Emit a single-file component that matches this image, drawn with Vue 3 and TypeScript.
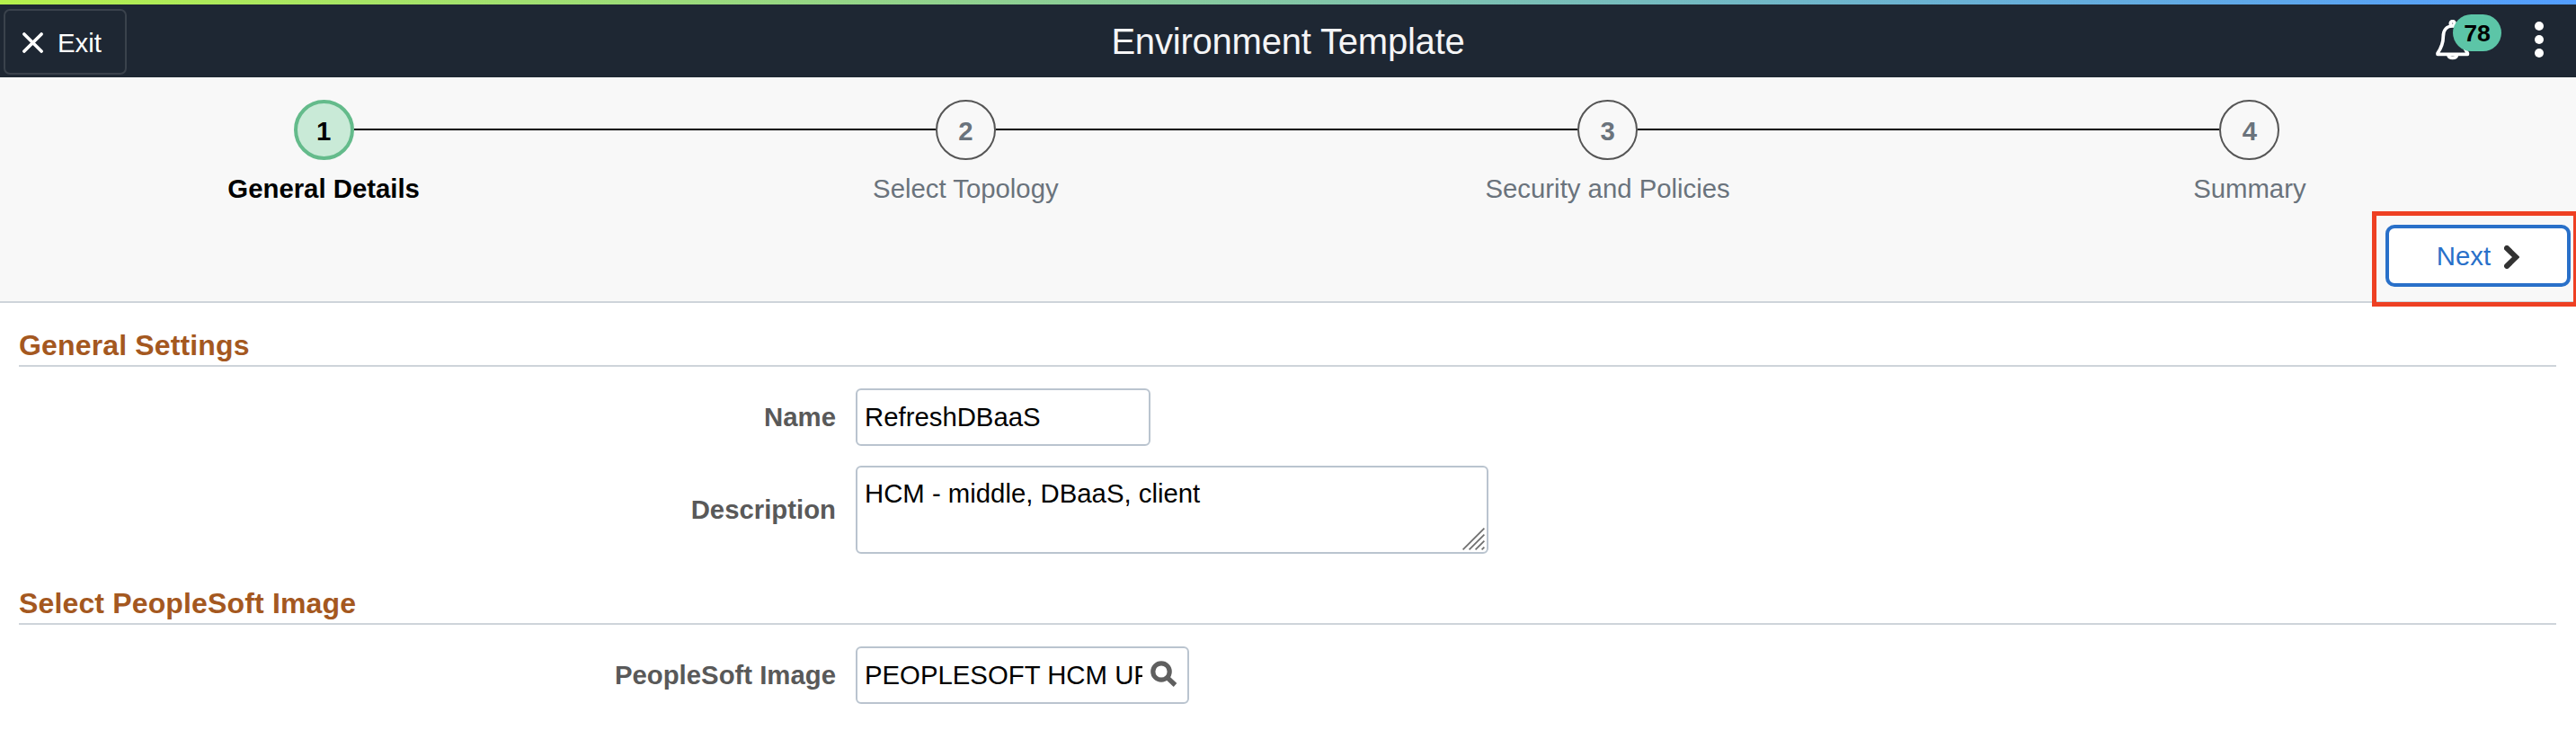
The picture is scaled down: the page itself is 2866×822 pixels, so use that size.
<script setup lang="ts">
import { ref } from 'vue'

interface Step {
  number: number
  label: string
}

const steps: Step[] = [
  { number: 1, label: 'General Details' },
  { number: 2, label: 'Select Topology' },
  { number: 3, label: 'Security and Policies' },
  { number: 4, label: 'Summary' },
]

const current = ref(1)
const name = ref('RefreshDBaaS')
const description = ref('HCM - middle, DBaaS, client')
const image = ref('PEOPLESOFT HCM UPDATE')
</script>

<template>
  <div class="page">
    <div class="accent"></div>
    <header class="banner">
      <button class="exit" type="button">
        <svg class="exit-icon" viewBox="0 0 23 23">
          <path d="M1.9 1.9 21.1 21.1M21.1 1.9 1.9 21.1" />
        </svg>
        <span>Exit</span>
      </button>
      <h1 class="title">Environment Template</h1>
      <div class="actions">
        <div class="bell">
          <svg class="bell-icon" viewBox="0 0 38 45">
            <circle cx="18.7" cy="4" r="2.4" />
            <path d="M2 37.2C6 31.5 8.3 26 8.3 18.5C8.3 11.5 12 7 18.7 7C25.4 7 29.1 11.5 29.1 18.5C29.1 26 31.4 31.5 35.4 37.2V38.3H2Z" />
            <path d="M14 39.5C15 43.4 22.4 43.4 23.4 39.5" />
          </svg>
          <span class="badge">78</span>
        </div>
        <svg class="dots" viewBox="0 0 10 40">
          <circle cx="5" cy="5" r="5" />
          <circle cx="5" cy="20" r="5" />
          <circle cx="5" cy="35" r="5" />
        </svg>
      </div>
    </header>

    <section class="wizard">
      <ol class="steps">
        <li v-for="step in steps" :key="step.number" class="step" :class="{ active: step.number === current }">
          <div class="track">
            <span class="line" :class="{ hidden: step.number === 1 }"></span>
            <span class="circle">{{ step.number }}</span>
            <span class="line" :class="{ hidden: step.number === steps.length }"></span>
          </div>
          <span class="step-label">{{ step.label }}</span>
        </li>
      </ol>
      <div class="callout">
        <button class="next" type="button">
          <span>Next</span>
          <svg class="chevron" viewBox="0 0 17 26"><path d="M3 3 13.3 13 3 23" /></svg>
        </button>
      </div>
    </section>

    <main class="content">
      <h2 class="heading">General Settings</h2>
      <div class="row name-row">
        <label class="label" for="name">Name</label>
        <input id="name" v-model="name" class="field name" type="text" spellcheck="false" />
      </div>
      <div class="row description-row">
        <label class="label" for="description">Description</label>
        <div class="field area">
          <textarea id="description" v-model="description" spellcheck="false"></textarea>
          <svg class="grip" viewBox="0 0 25 25">
            <path d="M.6 24.4 24.4 .6M7.6 24.4 24.4 7.6M14.6 24.4 24.4 14.6M21.6 24.4 24.4 21.6" />
          </svg>
        </div>
      </div>
      <h2 class="heading second">Select PeopleSoft Image</h2>
      <div class="row image-row">
        <label class="label" for="image">PeopleSoft Image</label>
        <div class="field lookup">
          <input id="image" v-model="image" type="text" spellcheck="false" />
          <svg class="search" viewBox="0 0 30 29">
            <circle cx="12" cy="12" r="9.2" />
            <path d="M18.5 18.5 27.5 27" />
          </svg>
        </div>
      </div>
    </main>
  </div>
</template>

<style>
body {
  background: #fff;
  overflow: hidden;
}
</style>

<style scoped>
.page {
  width: 2866px;
  height: 822px;
  overflow: hidden;
  background: #fff;
  color: #000;
  font-family: "Liberation Sans", Arial, sans-serif;
  font-size: 29.33px;
}
.page *,
.page *::before {
  box-sizing: border-box;
}
button,
input,
textarea {
  font: inherit;
  margin: 0;
  outline: none;
}
svg {
  display: block;
  fill: none;
}
.accent {
  height: 5px;
  background: linear-gradient(90deg, #b5f04c, #529dff);
}
.banner {
  display: grid;
  grid-template-columns: 1fr auto 1fr;
  height: 81px;
  background: #1e2733;
}
.exit {
  display: flex;
  gap: 16px;
  width: 137px;
  height: 73px;
  margin: 5px 0 0 4px;
  padding: 0 0 0 19px;
  border: 2px solid #3a424c;
  border-radius: 7px;
  background: none;
  color: #fff;
  line-height: 71px;
}
.exit-icon {
  width: 23px;
  height: 23px;
  margin-top: 24px;
  stroke: #fff;
  stroke-width: 3.6;
  stroke-linecap: round;
}
.title {
  margin: 0;
  color: #f5f5f6;
  font-size: 40px;
  font-weight: 400;
  letter-spacing: -0.2px;
  line-height: 83px;
}
.actions {
  display: flex;
  justify-content: flex-end;
  gap: 37px;
  padding-right: 36px;
}
.bell {
  display: flex;
  padding-top: 11px;
}
.bell-icon {
  width: 38px;
  height: 45px;
  margin-top: 6px;
  stroke: #fff;
  stroke-width: 3.7;
  stroke-linejoin: round;
}
.badge {
  z-index: 1;
  width: 54px;
  height: 41px;
  margin-left: -19px;
  border-radius: 20.5px;
  background: #5cc5a7;
  color: #000;
  font-size: 26.67px;
  font-weight: 700;
  line-height: 43px;
  text-align: center;
}
.dots {
  width: 10px;
  height: 40px;
  margin-top: 19px;
  fill: #fff;
}
.wizard {
  height: 251px;
  border-bottom: 2px solid #ced4da;
  background: #f8f8f8;
}
.steps {
  display: grid;
  grid-template-columns: repeat(4, 1fr);
  height: 149px;
  margin: 0;
  padding: 25px 6px 0 3px;
  list-style: none;
}
.step {
  display: flex;
  flex-direction: column;
  align-items: center;
  color: #6a737c;
}
.track {
  display: flex;
  width: 100%;
}
.line {
  flex: 1;
  height: 2px;
  margin-top: 32px;
  background: #000;
}
.line.hidden {
  visibility: hidden;
}
.circle {
  width: 67px;
  height: 67px;
  border: 2px solid #555;
  border-radius: 50%;
  font-weight: 700;
  line-height: 65px;
  text-align: center;
}
.active .circle {
  border: 4px solid #64bb8b;
  background: #c9ead7;
  line-height: 61px;
}
.step-label {
  margin-top: 12px;
  line-height: 40px;
}
.active {
  color: #000;
}
.active .step-label {
  font-weight: 700;
}
.callout {
  position: relative;
  width: 229px;
  height: 106px;
  margin-left: 2639px;
  padding: 10px;
  border: 5px solid #ee4023;
}
.next {
  display: flex;
  justify-content: center;
  gap: 15px;
  width: 206px;
  height: 69px;
  padding: 0;
  border: 4px solid #2970c9;
  border-radius: 10px;
  background: #fff;
  color: #2970c9;
  line-height: 61px;
}
.chevron {
  width: 17px;
  height: 26px;
  margin-top: 19px;
  stroke: #333;
  stroke-width: 6;
  stroke-linecap: round;
}
.content {
  padding: 27px 22px 0 21px;
}
.heading {
  height: 44px;
  margin: 0;
  border-bottom: 2px solid #ced4da;
  color: #a4581f;
  font-size: 32px;
  letter-spacing: 0.15px;
  line-height: 41px;
}
.row {
  display: flex;
  align-items: center;
}
.label {
  width: 909px;
  margin-right: 22px;
  color: #595959;
  font-weight: 700;
  text-align: right;
}
.field {
  border: 2px solid #bac4cf;
  border-radius: 6px;
  background: #fff;
}
.name-row {
  margin-top: 24px;
}
.name {
  width: 328px;
  height: 64px;
  padding: 0 8px;
}
.description-row {
  margin-top: 22px;
}
.area {
  position: relative;
  width: 704px;
  height: 98px;
}
.area textarea {
  display: block;
  width: 100%;
  height: 100%;
  padding: 11px 8px;
  border: 0;
  background: none;
  line-height: 36px;
  resize: none;
  overflow: hidden;
}
.grip {
  position: absolute;
  right: 2px;
  bottom: 2px;
  width: 25px;
  height: 25px;
  stroke: #6e6e6e;
  stroke-width: 1.7;
}
.heading.second {
  margin-top: 35px;
}
.image-row {
  margin-top: 24px;
}
.lookup {
  display: flex;
  gap: 9px;
  width: 371px;
  height: 64px;
  padding-left: 8px;
}
.lookup input {
  width: 309px;
  padding: 0;
  border: 0;
  background: none;
}
.search {
  width: 30px;
  height: 29px;
  margin-top: 14px;
  stroke: #5f5f5f;
  stroke-width: 5.2;
}
</style>
